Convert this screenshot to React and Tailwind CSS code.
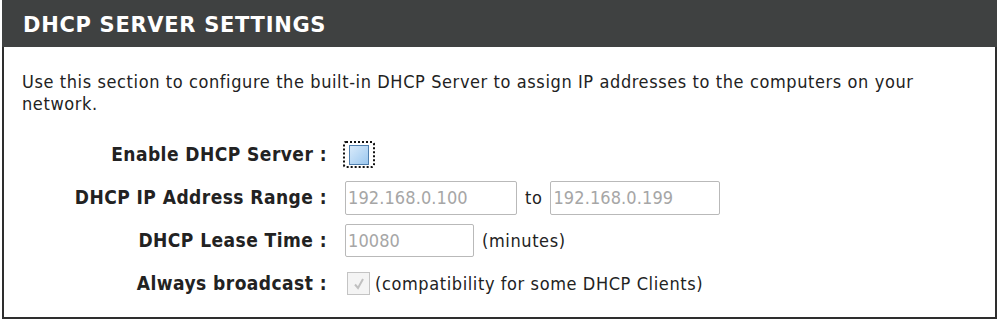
export default function App() {
  const body = { fontFamily: '"DejaVu Sans Condensed", "DejaVu Sans", sans-serif' };
  return (
    <div className="w-[1000px] h-[322px] bg-white pl-[2px] pr-[3px] pb-[3px]">
      <div className="h-full border-[2px] border-t-0 border-[#2e2e2e] flex flex-col">
        <div className="h-[47px] bg-[#3f4141] flex items-center -mx-[2px] pl-[21px] pt-[4px]">
          <span className="text-white font-bold text-[21px] tracking-[0.7px]" style={{ fontFamily: '"DejaVu Sans", sans-serif' }}>DHCP SERVER SETTINGS</span>
        </div>
        <div className="pl-[18px] pt-[24px] text-[18px] leading-[22px] text-[#222] tracking-[0.6px]" style={body}>
          <p className="w-[930px]">Use this section to configure the built-in DHCP Server to assign IP addresses to the computers on your network.</p>
          <div className="mt-[18px] grid grid-cols-[305px_1fr] gap-x-[18px] items-center">
            <div className="text-right font-bold h-[43px] leading-[43px] text-[19px] tracking-[0.45px]">Enable DHCP Server :</div>
            <div className="flex items-center">
              <div className="w-[32px] h-[27px] border-[2px] border-dotted border-[#111] rounded-[3px] flex items-center justify-center -ml-[2px]">
                <div className="w-[20px] h-[20px] border-[1.5px] border-[#4f7fae] bg-gradient-to-br from-[#d8eafa] to-[#9cc8ef]">
                </div>
              </div>
            </div>
            <div className="text-right font-bold h-[43px] leading-[43px] text-[19px] tracking-[0.45px]">DHCP IP Address Range :</div>
            <div className="flex items-center">
              <div className="w-[172px] h-[34px] border border-[#b9b9b9] rounded-[2px] px-[2px] flex items-center text-[#a6a6a6] tracking-[0.1px]">192.168.0.100</div>
              <span className="mx-[8px]">to</span>
              <div className="w-[170px] h-[34px] border border-[#b9b9b9] rounded-[2px] px-[2px] flex items-center text-[#a6a6a6] tracking-[0.1px]">192.168.0.199</div>
            </div>
            <div className="text-right font-bold h-[43px] leading-[43px] text-[19px] tracking-[0.45px]">DHCP Lease Time :</div>
            <div className="flex items-center">
              <div className="w-[129px] h-[33px] border border-[#b9b9b9] rounded-[2px] px-[2px] flex items-center text-[#a6a6a6] tracking-[0.1px]">10080</div>
              <span className="ml-[8px]">(minutes)</span>
            </div>
            <div className="text-right font-bold h-[43px] leading-[43px] text-[19px] tracking-[0.45px]">Always broadcast :</div>
            <div className="flex items-center">
              <div className="w-[23px] h-[23px] border border-[#c4c4c4] bg-[#f4f4f4] flex items-center justify-center ml-[2px]">
                <svg width="14" height="14" viewBox="0 0 14 14"><path d="M3 7.5 L6 11 L11 2" fill="none" stroke="#c0c0c0" strokeWidth="2" /></svg>
              </div>
              <span className="ml-[5px]">(compatibility for some DHCP Clients)</span>
            </div>
          </div>
        </div>
      </div>
    </div>
  );
}
